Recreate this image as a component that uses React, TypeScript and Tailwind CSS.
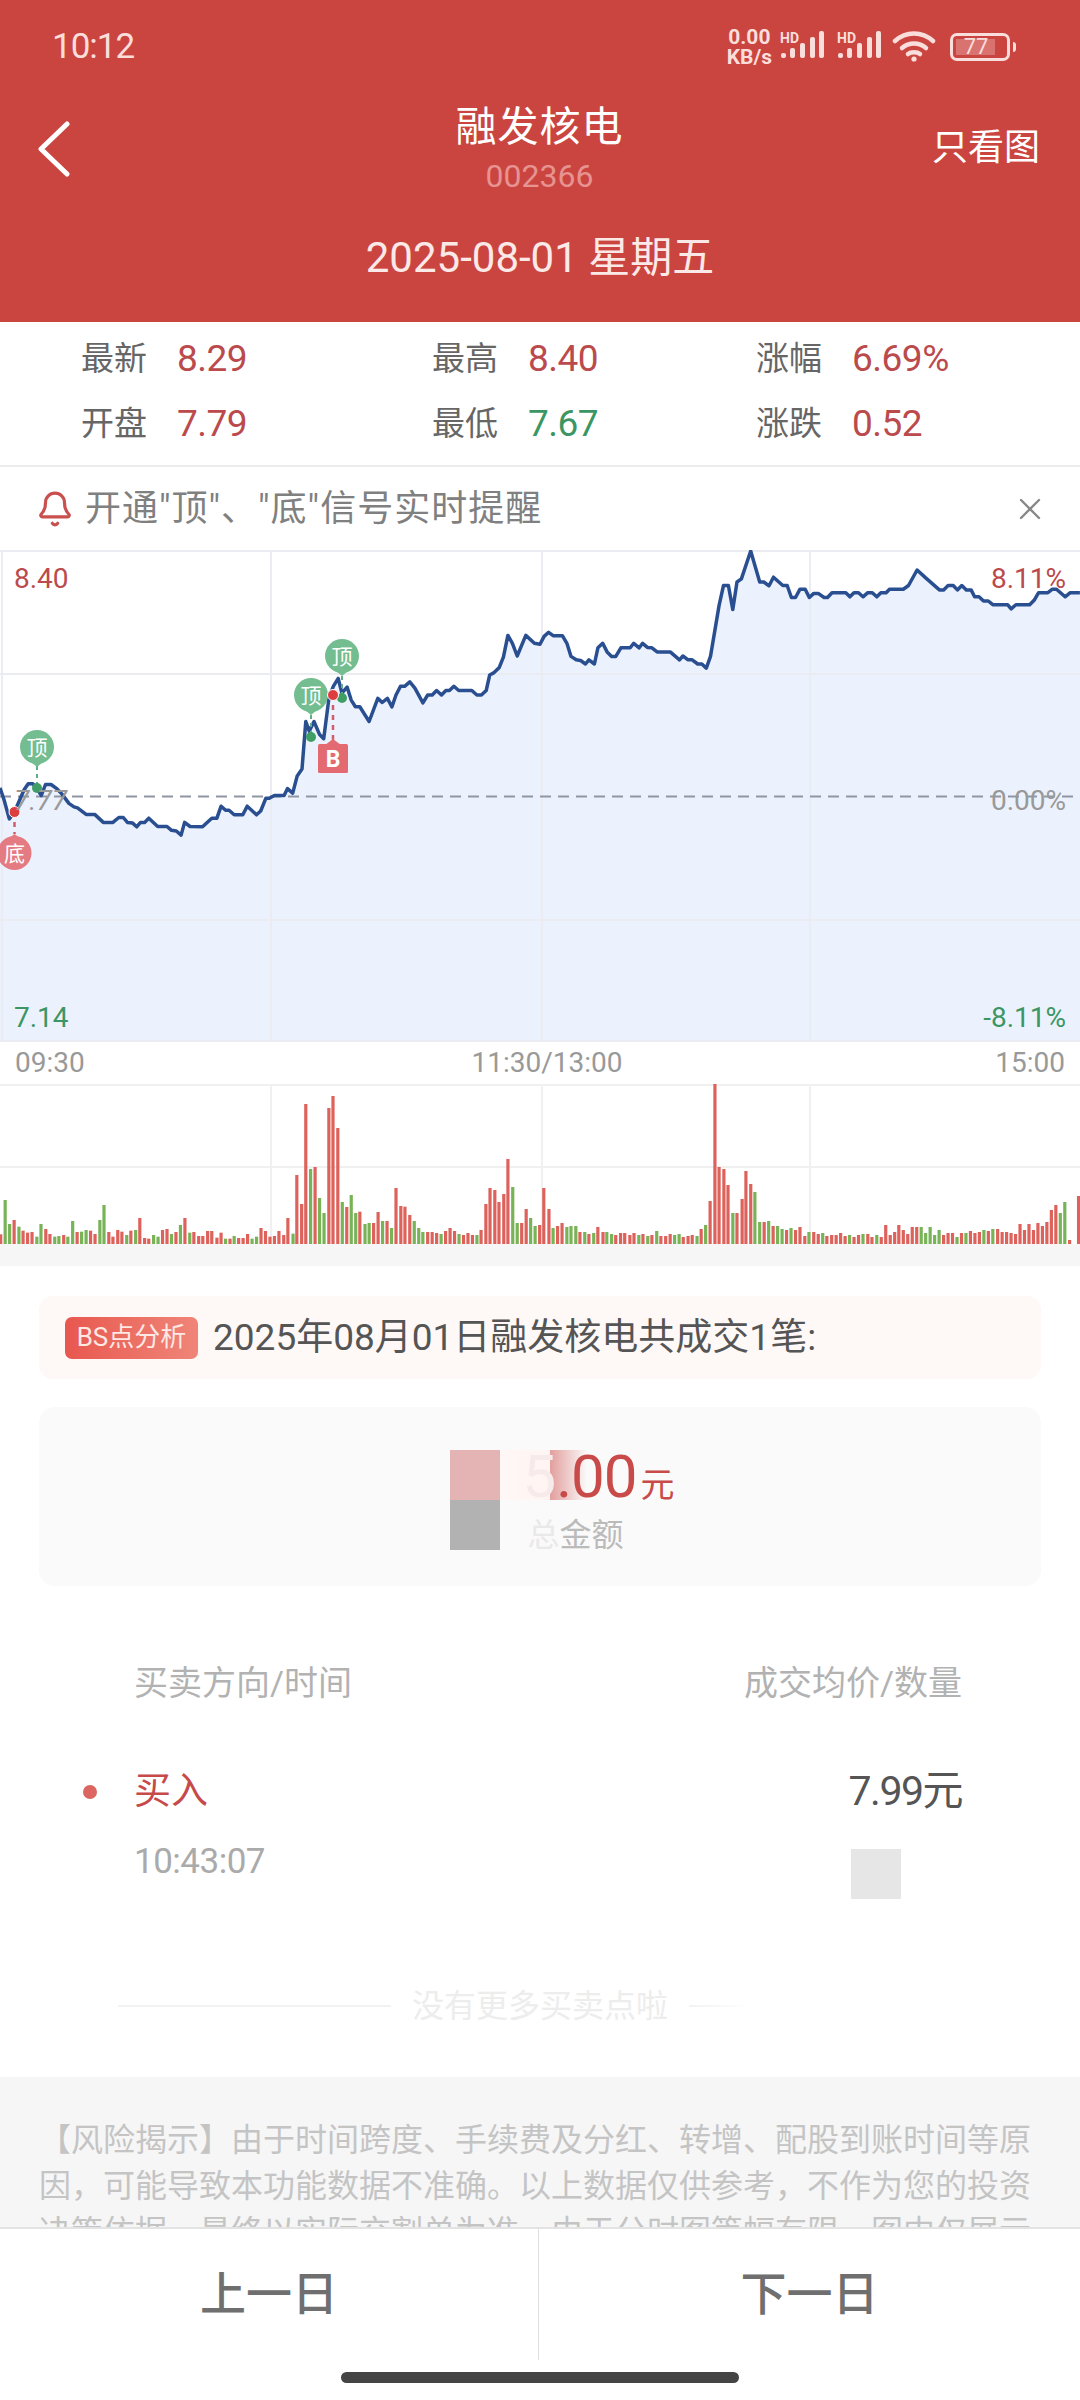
import { Bell, X } from "lucide-react";

// price line, traced in zoomed units (1 unit = 1/2.904 px)
const leftLine =
  "0,720 12,755 27,810 42,790 55,760 70,725 82,708 95,708 108,722 120,742 132,710 148,710 165,722 180,738 200,765 215,775 225,778 250,797 275,797 300,820 328,820 345,806 358,806 370,820 385,822 397,833 408,820 420,820 432,808 458,832 485,832 498,843 512,845 526,857 536,820 552,832 588,833 615,808 630,808 642,773 655,785 665,785 680,798 705,798 718,773 745,798 757,787 772,750 782,750 797,742 825,742 835,722 850,735 863,685 877,665 888,527 898,555 912,527 928,565 940,577 955,460 968,425 982,402 993,445 1008,427 1020,465 1032,484 1045,484 1072,527 1097,460 1110,472 1125,460 1138,485 1150,450 1163,425 1175,425 1190,412 1205,430 1228,473 1242,450 1255,450 1268,437 1282,450 1295,437 1305,437 1318,425 1332,437 1370,437 1385,450 1398,450 1412,437 1422,392 1435,385 1450,370 1462,340 1475,277 1488,300 1502,337 1527,277 1552,300";
const rightLine =
  "0,303 12,280 25,268 38,278 65,278 78,300 90,338 105,348 118,350 132,360 142,348 158,360 168,313 182,300 195,325 208,338 220,338 235,313 262,313 272,300 288,313 298,300 312,312 325,313 340,325 378,325 405,348 415,337 430,348 442,348 458,360 470,360 483,372 495,338 520,190 533,132 547,132 560,202 572,122 585,113 612,32 638,122 650,122 665,133 678,108 705,132 718,132 730,167 742,167 755,143 770,143 782,167 795,155 808,155 825,167 835,167 848,153 888,153 900,165 912,153 925,153 938,165 952,153 965,153 978,165 990,153 1005,153 1015,143 1055,143 1070,132 1095,87 1120,110 1160,145 1172,145 1185,132 1200,132 1212,145 1225,132 1238,145 1252,145 1262,165 1275,165 1288,177 1302,177 1315,188 1358,188 1368,200 1382,188 1422,188 1435,175 1448,153 1475,153 1488,143 1500,143 1525,165 1540,153 1568,153";

// volume bars: x top colour, x in 1/2.904 px, top in 1/3 px
const leftBars =
  "2 493 r,15 390 g,28 462 g,41 450 r,55 470 g,67 482 r,80 488 r,93 486 r,107 500 g,119 462 g,133 477 r,145 492 r,159 500 g,171 498 g,185 495 r,197 500 g,211 453 g,224 486 r,237 485 g,250 480 g,263 482 r,276 492 r,290 450 g,302 405 g,316 486 r,328 500 r,342 480 r,354 485 r,368 495 g,380 482 r,394 480 g,406 444 r,420 504 r,432 506 r,446 495 g,459 500 g,472 480 r,485 477 r,498 492 g,511 486 r,524 465 g,537 444 r,551 488 g,563 486 r,577 498 r,589 498 r,603 483 r,615 483 r,630 503 r,642 488 r,655 506 g,668 506 r,680 498 g,693 504 r,706 504 r,719 492 r,732 506 g,745 500 g,758 474 r,771 483 r,784 500 r,797 498 r,810 483 r,824 495 r,836 444 r,851 491 g,862 315 r,876 402 r,888 102 r,902 297 g,915 291 r,928 384 g,941 429 g,955 114 r,967 78 r,981 174 r,994 396 g,1007 411 r,1020 375 g,1033 429 g,1045 425 r,1060 462 g,1072 459 g,1085 459 r,1098 426 r,1111 453 g,1124 453 r,1137 474 g,1150 354 r,1164 408 r,1176 410 r,1190 435 r,1203 453 g,1216 474 g,1228 486 g,1242 486 r,1255 486 r,1268 489 r,1281 492 g,1294 483 r,1307 474 r,1320 483 r,1333 492 g,1346 495 r,1359 489 r,1372 495 r,1385 495 g,1397 480 r,1411 402 r,1423 354 r,1437 360 r,1449 396 r,1463 372 r,1475 267 r,1489 351 g,1502 459 g,1515 459 r,1528 417 r,1541 444 g,1554 468 g";
const rightBars =
  "-1 465 r,11 354 r,26 417 r,38 474 g,51 468 r,64 459 r,78 471 g,90 468 g,104 468 g,116 486 r,130 486 g,142 492 r,156 489 g,168 471 r,183 486 r,194 486 g,208 492 g,220 495 r,234 489 r,246 489 r,261 495 r,273 489 r,287 495 g,299 492 r,313 498 g,325 495 r,339 483 g,351 498 r,365 498 r,378 492 r,391 495 g,404 492 g,416 501 r,430 498 r,442 495 r,456 498 g,468 477 r,481 465 g,494 393 r,508 42 r,520 291 r,534 297 r,546 345 r,560 429 g,572 429 r,587 387 r,598 303 r,612 342 r,624 366 g,638 456 g,651 456 r,664 453 g,677 468 r,690 468 g,703 477 g,716 480 r,729 474 g,742 480 r,755 471 r,769 498 r,781 486 g,795 486 r,808 492 r,821 489 g,833 498 r,847 495 r,860 495 r,873 489 r,886 498 r,899 495 g,912 501 r,925 495 r,938 492 g,952 492 r,964 501 r,978 495 g,991 501 r,1004 465 r,1017 495 r,1030 486 r,1042 465 r,1055 480 r,1068 492 r,1081 471 r,1094 471 r,1107 471 g,1120 489 g,1133 471 g,1146 495 g,1159 480 g,1172 495 r,1185 489 r,1198 489 r,1211 501 g,1224 489 r,1237 489 g,1250 483 r,1263 489 r,1276 486 r,1289 480 g,1302 483 r,1315 477 g,1329 477 r,1342 486 r,1355 486 r,1368 489 r,1381 492 r,1394 462 r,1407 480 r,1420 462 r,1433 480 r,1446 459 r,1459 468 r,1472 456 r,1485 420 r,1498 405 r,1511 429 g,1524 396 g,1538 510 r,1564 378 r";

const U = 2.904;
const VOLUME_H = 160;

const riskText =
  "【风险揭示】由于时间跨度、手续费及分红、转增、配股到账时间等原因\uFF0C可能导致本功能数据不准确。以上数据仅供参考\uFF0C不作为您的投资决策依据\uFF0C最终以实际交割单为准。由于分时图篇幅有限\uFF0C图中仅展示";

const toChartPoints = (raw: string, offset: number) =>
  raw.split(" ").map((p) => {
    const [x, y] = p.split(",").map(Number);
    return [+(offset + x / U).toFixed(1), +(y / U - 10).toFixed(1)];
  });

const linePoints = [...toChartPoints(leftLine, 0), ...toChartPoints(rightLine, 540)];
const linePath = linePoints.map((p) => p.join(",")).join(" ");

const parseBars = (raw: string, offset: number) =>
  raw.split(",").map((b) => {
    const [x, top, c] = b.split(" ");
    return { x: offset + Number(x) / U, top: Number(top) / 3 - 14, red: c === "r" };
  });

const bars = [...parseBars(leftBars, 0), ...parseBars(rightBars, 540)];

const stats = [
  [
    { label: "最新", value: "8.29", color: "text-[#bb4a4c]" },
    { label: "最高", value: "8.40", color: "text-[#bb4a4c]" },
    { label: "涨幅", value: "6.69%", color: "text-[#bb4a4c]" },
  ],
  [
    { label: "开盘", value: "7.79", color: "text-[#bb4a4c]" },
    { label: "最低", value: "7.67", color: "text-[#3c9664]" },
    { label: "涨跌", value: "0.52", color: "text-[#bb4a4c]" },
  ],
];

function Signal({ className }: { className?: string }) {
  return (
    <div className={`relative h-[32px] w-[44px] ${className ?? ""}`}>
      <span className="absolute left-0 top-0 text-[14px] leading-[14px] font-bold">HD</span>
      <svg width="44" height="32" viewBox="0 0 44 32" className="absolute left-0 top-0">
        <g fill="currentColor">
          <rect x="1" y="22" width="5" height="5" rx="2" />
          <rect x="10" y="17" width="5" height="10" rx="2" />
          <rect x="20" y="12" width="5" height="15" rx="2" />
          <rect x="30" y="6" width="5" height="21" rx="2" />
          <rect x="39" y="0" width="5" height="27" rx="2" />
        </g>
      </svg>
    </div>
  );
}

function StatusBar() {
  return (
    <div className="flex h-[94px] items-center justify-between pl-[52px] pr-[64px] text-[#f9dedc]">
      <span className="text-[35px] tracking-[-1px]">10:12</span>
      <div className="flex items-center">
        <div className="mr-[8px] text-center text-[21px] leading-[20px] font-bold">
          <div>0.00</div>
          <div>KB/s</div>
        </div>
        <Signal className="mr-[13px]" />
        <Signal className="mr-[11px]" />
        <svg width="44" height="32" viewBox="0 0 44 32" className="mr-[14px]" fill="none" stroke="currentColor" strokeWidth="4.5" strokeLinecap="round">
          <path d="M3 10 C14 0 30 0 41 10" />
          <path d="M10 17 C17 11 27 11 34 17" />
          <path d="M16 23 C19 20.5 25 20.5 28 23" />
          <circle cx="22" cy="28" r="2.6" fill="currentColor" stroke="none" />
        </svg>
        <div className="relative h-[28px] w-[60px] rounded-[7px] border-[3px] border-current p-[3px]">
          <div className="h-full w-[39px] bg-white/25" />
          <span className="absolute inset-0 flex items-center justify-center pr-[8px] text-[22px] leading-none">77</span>
        </div>
        <div className="ml-[3px] h-[10px] w-[3px] rounded-r bg-current" />
      </div>
    </div>
  );
}

function Pin({ x, y, label, color, up }: { x: number; y: number; label: string; color: string; up?: boolean }) {
  // y is the circle centre, tip points to the line (down for 顶, up for 底)
  const tip = up ? y - 19 : y + 20;
  const side = up ? y - 10 : y + 10;
  return (
    <g>
      <circle cx={x} cy={y} r="17" fill={color} />
      <polygon points={`${x - 12},${side} ${x + 12},${side} ${x},${tip}`} fill={color} />
      <text x={x} y={y + 7.5} textAnchor="middle" fontSize="21" fill="#fff">
        {label}
      </text>
    </g>
  );
}

function PriceChart() {
  return (
    <div className="relative h-[492px] w-full text-[28px] leading-[28px]">
      <svg width="1080" height="492" viewBox="0 0 1080 492" className="block">
        <polygon points={`0,491 ${linePath} 1080,43 1080,491`} fill="#ecf2fd" />
        <g stroke="#eaecf1" strokeWidth="2" fill="none">
          <path d="M0 1H1080M2 0V491M271 0V491M542 0V491M810 0V491M0 124H1080M0 370H1080M0 491H1080" />
        </g>
        <path d="M0 246.5H1080" stroke="#8f95a3" strokeWidth="2" strokeDasharray="11 7" />
        <polyline points={linePath} fill="none" stroke="#2a4f91" strokeWidth="3.5" strokeLinejoin="round" />

        <path d="M37 216V238M311 165V187M342 126V148" stroke="#5fae85" strokeWidth="2" strokeDasharray="4 4" />
        <path d="M14.5 262V284M333 145V190" stroke="#cf5d6d" strokeWidth="2.5" strokeDasharray="5 5" />

        <Pin x={37} y={197} label="顶" color="#73bd90" />
        <Pin x={311} y={145} label="顶" color="#73bd90" />
        <Pin x={342} y={106} label="顶" color="#73bd90" />
        <Pin x={14.5} y={303} label="底" color="#e57b82" up />

        <polygon points="325,195 333,189 341,195" fill="#e36a70" />
        <rect x="318" y="194" width="30" height="29" rx="1.5" fill="#e36a70" />
        <text x="333" y="217" textAnchor="middle" fontSize="23" fontWeight="700" fill="#fff">
          B
        </text>

        <circle cx="37" cy="238" r="5" fill="#3f9e63" />
        <circle cx="311" cy="187" r="5" fill="#3f9e63" />
        <circle cx="342" cy="148" r="5" fill="#3f9e63" />
        <circle cx="14.5" cy="262" r="5.5" fill="#de3d3f" stroke="#fff" />
        <circle cx="333" cy="145" r="5.5" fill="#de3d3f" stroke="#fff" />
      </svg>

      {/* axis labels sit on top of the chart */}
      <span className="absolute left-[14px] top-[15px] text-[#bb4a4c]">8.40</span>
      <span className="absolute left-[14px] top-[237px] text-[#999] italic">7.77</span>
      <span className="absolute left-[14px] top-[454px] text-[#3c9664]">7.14</span>
      <span className="absolute right-[14px] top-[15px] text-[#bb4a4c]">8.11%</span>
      <span className="absolute right-[14px] top-[237px] text-[#999]">0.00%</span>
      <span className="absolute right-[14px] top-[454px] text-[#3c9664]">-8.11%</span>
    </div>
  );
}

function VolumeChart() {
  return (
    <svg width="1080" height={VOLUME_H} viewBox={`0 0 1080 ${VOLUME_H}`} className="block">
      <path d={`M0 1H1080M271 0V${VOLUME_H}M542 0V${VOLUME_H}M810 0V${VOLUME_H}M0 83H1080`} stroke="#f0f0f0" strokeWidth="2" fill="none" />
      {bars.map((b, i) => (
        <rect key={i} x={b.x - 1.6} y={b.top} width="3.2" height={Math.max(VOLUME_H - b.top, 1)} fill={b.red ? "#dd625c" : "#79b358"} />
      ))}
    </svg>
  );
}

export default function App() {
  return (
    <div className="flex h-[2400px] w-[1080px] flex-col overflow-hidden bg-white [font-family:Roboto,'Noto_Sans_CJK_SC',sans-serif]">
      <div className="h-[2227px] shrink-0 overflow-hidden">
        {/* header */}
        <div className="h-[322px] bg-[#cb4540] text-white">
          <StatusBar />
          <div className="grid grid-cols-[1fr_auto_1fr] items-start pl-[36px] pr-[40px]">
            <svg width="36" height="56" viewBox="0 0 36 56" className="mt-[27px]" fill="none" stroke="currentColor" strokeWidth="5" strokeLinecap="round" strokeLinejoin="round">
              <path d="M31 3 L5 28 L31 53" />
            </svg>
            <div className="mt-[8px] pl-[3px] text-center">
              <div className="text-[41px] leading-[50px] tracking-[1px]">融发核电</div>
              <div className="mt-[4px] text-[32px] leading-[40px] text-[#e69391]">002366</div>
            </div>
            <div className="mt-[32px] justify-self-end text-[36px] leading-[44px]">只看图</div>
          </div>
          <div className="mt-[38px] text-center text-[42px] leading-[48px] text-[#fbe9e8]">2025-08-01 星期五</div>
        </div>

        {/* quote numbers */}
        <div className="h-[145px] border-b-2 border-[#ececec] pt-[4px]">
          {stats.map((row, i) => (
            <div key={i} className="grid h-[65px] grid-cols-[351px_324px_1fr] items-center pl-[81px]">
              {row.map((s) => (
                <div key={s.label} className="flex items-center">
                  <span className="w-[96px] text-[33px] text-[#666]">{s.label}</span>
                  <span className={`text-[37px] tracking-[-0.5px] ${s.color}`}>{s.value}</span>
                </div>
              ))}
            </div>
          ))}
        </div>

        {/* signal reminder */}
        <div className="flex h-[83px] items-center justify-between pl-[36px] pr-[32px]">
          <div className="flex items-center gap-[11px] text-[36px] tracking-[1px] text-[#808080]">
            <Bell size={38} strokeWidth={2} className="text-[#c9504f]" />
            <span>开通"顶"、"底"信号实时提醒</span>
          </div>
          <X size={36} strokeWidth={1.6} className="text-[#888]" />
        </div>

        <PriceChart />

        <div className="flex h-[42px] items-center justify-between px-[15px] text-[28px] text-[#999]">
          <span>09:30</span>
          <span className="ml-[14px]">11:30/13:00</span>
          <span>15:00</span>
        </div>

        <VolumeChart />
        <div className="h-[22px] bg-[#f6f6f6]" />

        {/* BS analysis */}
        <div className="px-[39px] pt-[30px]">
          <div className="flex h-[83px] items-center rounded-[14px] bg-[#fef9f7] pl-[26px]">
            <span className="flex h-[42px] w-[133px] items-center justify-center rounded-[7px] bg-gradient-to-r from-[#e8574f] to-[#ef8578] text-[26px] text-[#fde8e4]">
              BS点分析
            </span>
            <span className="ml-[15px] text-[37px] text-[#555]">2025年08月01日融发核电共成交1笔:</span>
          </div>

          <div className="relative mt-[28px] flex h-[179px] flex-col items-center rounded-[16px] bg-[#fafafa] pl-[117px] pt-[36px]">
            {/* masked amount */}
            <div className="absolute left-[411px] top-[43px] h-[100px] w-[50px]">
              <div className="h-[50px] bg-[#e4b3b3]" />
              <div className="h-[50px] bg-[#b2b2b2]" />
            </div>
            <div className="absolute left-[461px] top-[43px] h-[50px] w-[51px] bg-gradient-to-r from-[#fff8f6] to-[#fff4f2]" />
            <div className="absolute left-[511px] top-[43px] h-[50px] w-[37px] bg-gradient-to-r from-[#e29f9d] to-transparent" />

            <div className="relative flex h-[68px] items-baseline text-[#c84b4a]">
              <span className="text-[60px] leading-[68px] text-[#f6ebea]">5</span>
              <span className="text-[60px] leading-[68px] tracking-[-1px]">.00</span>
              <span className="ml-[4px] text-[34px]">元</span>
            </div>
            <div className="relative -ml-[46px] mt-[4px] text-[32px] leading-[40px] text-[#bbb]">
              <span className="text-[#e9e9e9]">总</span>金额
            </div>
          </div>

          {/* trade list */}
          <div className="mt-[75px] flex items-center justify-between pl-[95px] pr-[79px] text-[34px] leading-[44px] text-[#b2b2b2]">
            <span>买卖方向/时间</span>
            <span>成交均价/数量</span>
          </div>
          <div className="relative mt-[65px] pl-[95px] pr-[79px]">
            <span className="absolute left-[44px] top-[15px] size-[14px] rounded-full bg-[#dc6560]" />
            <div className="flex h-[44px] items-center justify-between">
              <span className="text-[37px] text-[#c64a4a]">买入</span>
              <span className="text-[41px] tracking-[-1.5px] text-[#555]">7.99元</span>
            </div>
            <div className="mt-[23px] flex items-start justify-between">
              <span className="text-[35px] leading-[50px] tracking-[-0.5px] text-[#aaa]">10:43:07</span>
              <div className="mr-[61px] mt-[12px] h-[50px] w-[50px] bg-[#e6e6e6]" />
            </div>
          </div>
        </div>

        <div className="mt-[85px] flex h-[44px] items-center pl-[118px]">
          <div className="h-[2px] w-[273px] bg-[#f2f2f2]" />
          <span className="mx-[21px] text-[32px] text-[#ededed]">没有更多买卖点啦</span>
          <div className="h-[2px] w-[61px] bg-gradient-to-r from-[#f2f2f2] to-transparent" />
        </div>

        {/* risk notice, runs on under the bottom bar */}
        <div className="mt-[49px] bg-[#f6f6f6] px-[39px] pt-[40px] text-[32px] leading-[46px] text-[#c4c4c4]">{riskText}</div>
      </div>

      {/* bottom bar */}
      <div className="relative flex-1 border-t-2 border-[#e3e3e3]">
        <div className="flex h-[131px]">
          <div className="flex w-[539px] items-center justify-center border-r border-[#e0e0e0] text-[46px] font-medium text-[#6f6f6f]">上一日</div>
          <div className="flex flex-1 items-center justify-center text-[46px] font-medium text-[#6f6f6f]">下一日</div>
        </div>
        <div className="mx-auto mt-[12px] h-[11px] w-[398px] rounded-full bg-[#444]" />
      </div>
    </div>
  );
}
